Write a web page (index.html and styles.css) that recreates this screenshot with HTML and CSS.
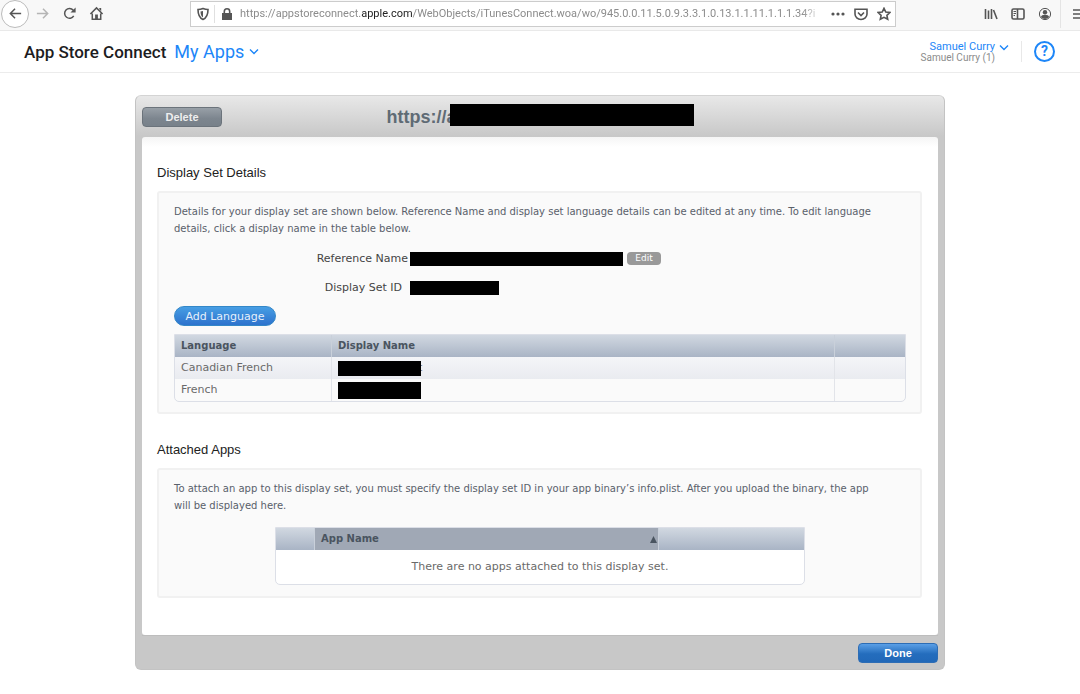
FILE: index.html
```html
<!DOCTYPE html>
<html lang="en">
<head>
<meta charset="utf-8">
<title>App Store Connect</title>
<link rel="stylesheet" href="styles.css">
</head>
<body>
<nav class="toolbar" aria-label="Browser">
  <div class="nav-buttons">
    <button class="icon-btn back" aria-label="Back"><svg width="16" height="16" viewBox="0 0 16 16"><path d="M14 8H2.5M7.500 3L2.500 8l5 5"/></svg></button>
    <button class="icon-btn faded" aria-label="Forward"><svg width="16" height="16" viewBox="0 0 16 16"><path d="M2 8h11.500M8.500 3l5 5-5 5"/></svg></button>
    <button class="icon-btn" aria-label="Reload"><svg width="16" height="16" viewBox="0 0 16 16"><path d="M12.500 10.500A5.200 5.200 0 1 1 12 4.500"/><path class="solid" d="M14.500 1.500v5.500H9z"/></svg></button>
    <button class="icon-btn" aria-label="Home"><svg width="16" height="16" viewBox="0 0 16 16"><path d="M1.500 8.500L8 2l6.500 6.500M3.500 8v6h9V8"/><path class="solid" d="M6.500 14V9h3v5zM11 2h2v3.500l-2-2z"/></svg></button>
  </div>
  <div class="address">
    <button class="icon-btn shield" aria-label="Tracking protection"><svg width="14" height="14" viewBox="0 0 14 14"><path d="M7 1.500c2 .8 3.500 1 5 1 0 5-1.500 8.500-5 10-3.500-1.500-5-5-5-10 1.500 0 3-.2 5-1z"/><path class="solid" d="M7 4v6.500C5.200 9.300 4.500 7 4.500 4.500z"/></svg></button>
    <svg class="lock" width="12" height="14" viewBox="0 0 12 14"><path class="solid" d="M1 6h10v7H1z"/><path d="M3.300 7V4.500a2.700 2.700 0 0 1 5.400 0V7"/></svg>
    <div class="url" role="textbox" aria-label="Address" contenteditable="true" spellcheck="false">https://appstoreconnect.<span class="domain">apple.com</span>/WebObjects/iTunesConnect.woa/wo/945.0.0.11.5.0.9.3.3.1.0.13.1.1.11.1.1.1.34?i</div>
    <button class="icon-btn" aria-label="Page actions"><svg width="14" height="14" viewBox="0 0 14 14"><g class="solid"><circle cx="2" cy="7" r="1.600"/><circle cx="7" cy="7" r="1.600"/><circle cx="12" cy="7" r="1.600"/></g></svg></button>
    <button class="icon-btn" aria-label="Save to Pocket"><svg width="14" height="14" viewBox="0 0 14 14"><path d="M1 2.200h12V7A6 5.500 0 0 1 1 7zM4 5.500l3 3 3-3"/></svg></button>
    <button class="icon-btn" aria-label="Bookmark"><svg width="14" height="14" viewBox="0 0 14 14"><path d="M7 1.300l1.800 3.700 4.100.5-3 2.800.8 4L7 10.300l-3.700 2 .8-4-3-2.800 4.100-.5z"/></svg></button>
  </div>
  <div class="tools">
    <button class="icon-btn" aria-label="Library"><svg width="14" height="14" viewBox="0 0 14 14"><path d="M1.500 2v10M4.500 3.500V12M7.500 2v10M9.500 3l3.500 9"/></svg></button>
    <button class="icon-btn" aria-label="Sidebars"><svg width="14" height="14" viewBox="0 0 14 14"><rect x="1" y="2" width="12" height="10" rx="1.500"/><path d="M6.500 2v10"/><path class="thin" d="M2.500 4.500H5M2.500 6.500H5M2.500 8.500H4"/></svg></button>
    <button class="icon-btn" aria-label="Account"><svg width="14" height="14" viewBox="0 0 14 14"><circle class="thin" cx="7" cy="7" r="5.600"/><circle class="solid" cx="7" cy="5.300" r="2.200"/><path class="solid" d="M3 10c0-3 8-3 8 0-2 2.500-6 2.500-8 0z"/></svg></button>
  </div>
  <button class="icon-btn menu" aria-label="Menu"><svg width="14" height="14" viewBox="0 0 14 14"><path d="M1 3h12M1 7h12M1 11h12"/></svg></button>
</nav>

<header class="site-header">
  <h1 class="brand">App Store Connect</h1>
  <a class="section-link" href="#apps">My Apps <svg width="10" height="7" viewBox="0 0 10 7"><path d="M1 1.500l4 4 4-4"/></svg></a>
  <div class="user">
    <a class="user-name" href="#account">Samuel Curry <svg width="10" height="7" viewBox="0 0 10 7"><path d="M1 1.500l4 4 4-4"/></svg></a>
    <span class="user-org">Samuel Curry (1)</span>
  </div>
  <a class="help" href="#help" aria-label="Help"><span class="help-mark">?</span></a>
</header>

<main class="panel">
  <div class="panel-head">
    <button class="btn delete">Delete</button>
    <h2 class="panel-title">https://a<span class="redacted title-mask"></span></h2>
  </div>
  <div class="panel-body">
    <section class="group">
      <h3 class="group-title">Display Set Details</h3>
      <div class="box">
        <p class="note">Details for your display set are shown below. Reference Name and display set language details can be edited at any time. To edit language details, click a display name in the table below.</p>
        <dl class="fields">
          <div class="field">
            <dt class="label">Reference Name</dt>
            <dd class="value"><span class="redacted name-mask"></span><button class="edit">Edit</button></dd>
          </div>
          <div class="field">
            <dt class="label spaced">Display Set ID</dt>
            <dd class="value"><span class="redacted id-mask"></span></dd>
          </div>
        </dl>
        <button class="add">Add Language</button>
        <table class="grid languages">
          <colgroup><col class="col-lang"><col><col class="col-end"></colgroup>
          <thead><tr><th>Language</th><th>Display Name</th><th></th></tr></thead>
          <tbody>
            <tr class="odd"><td>Canadian French</td><td><span class="masked"><span class="redacted cell-mask"></span><span class="tail">t</span></span></td><td></td></tr>
            <tr><td>French</td><td><span class="masked"><span class="redacted cell-mask tall"></span></span></td><td></td></tr>
          </tbody>
        </table>
      </div>
    </section>
    <section class="group">
      <h3 class="group-title">Attached Apps</h3>
      <div class="box apps-box">
        <p class="note">To attach an app to this display set, you must specify the display set ID in your app binary’s info.plist. After you upload the binary, the app will be displayed here.</p>
        <table class="grid apps">
          <colgroup><col class="col-icon"><col><col class="col-extra"></colgroup>
          <thead><tr><th></th><th class="sorted"><span class="sort-label">App Name <svg width="7" height="7" viewBox="0 0 7 7"><path d="M3.500 0L7 7H0z"/></svg></span></th><th></th></tr></thead>
          <tbody><tr><td class="empty" colspan="3">There are no apps attached to this display set.</td></tr></tbody>
        </table>
      </div>
    </section>
  </div>
  <div class="panel-foot"><button class="btn done">Done</button></div>
</main>
</body>
</html>
```
FILE: styles.css
```css
* { box-sizing: border-box; }
body {
  margin: 0;
  background: #fff;
  color: #59606a;
  font: 11px/16px "DejaVu Sans", Verdana, sans-serif;
}
button { font: inherit; border: 0; padding: 0; cursor: pointer; }
a { text-decoration: none; }
h1, h2, h3, p, dl, dd { margin: 0; }

/* Browser toolbar */
.toolbar {
  display: flex;
  align-items: center;
  height: 31px;
  padding-bottom: 3px;
  background: #f8f8f8;
  border-bottom: 1px solid #e9e9e9;
  overflow: hidden;
}
.icon-btn {
  display: flex;
  flex: none;
  align-items: center;
  justify-content: center;
  background: none;
}
.icon-btn svg, .lock {
  flex: none;
  fill: none;
  stroke: #555;
  stroke-width: 1.6;
}
.toolbar .solid { fill: #555; stroke: none; }
.toolbar .thin { stroke-width: 1; }
.nav-buttons { display: flex; align-items: center; gap: 12px; width: 190px; flex: none; }
.nav-buttons svg { width: 15px; height: 15px; }
.back {
  width: 28px;
  height: 28px;
  margin-left: 1px;
  margin-right: -6px;
  border: 1px solid #bbb;
  border-radius: 50%;
  background: #fff;
}
.icon-btn.faded svg { stroke: #b5b5b5; }
.address {
  display: flex;
  flex: 1;
  min-width: 0;
  align-items: center;
  gap: 9px;
  height: 26px;
  padding: 0 4px 0 5px;
  border: 1px solid #ccc;
  background: #fff;
}
.shield { width: 19px; height: 18px; padding-right: 5px; border-right: 1px solid #e0e0e0; }
.lock { margin: 0 -2px 0 -3px; }
.url {
  flex: 1;
  min-width: 0;
  overflow: hidden;
  white-space: nowrap;
  color: #8c8c8c;
  font: 11px/18px Roboto, "Noto Sans", sans-serif;
  -webkit-mask-image: linear-gradient(to left, transparent, #000 20px);
  mask-image: linear-gradient(to left, transparent, #000 20px);
}
.domain { color: #222; }
.tools { display: flex; gap: 13px; margin-left: 88px; padding-right: 8px; }
.menu { justify-content: flex-start; width: 20px; height: 28px; padding-left: 11px; border-left: 1px solid #e4e4e4; }

/* Site header */
.site-header {
  display: flex;
  align-items: center;
  height: 42px;
  padding: 0 25px 0 24px;
  border-bottom: 1px solid #ececec;
  font-family: Roboto, "Liberation Sans", sans-serif;
}
.site-header svg { fill: none; stroke: #1d86f8; stroke-width: 1.4; }
.brand { color: #1d1d1f; font-size: 17px; font-weight: 500; line-height: 24px; }
.section-link { margin-left: 8px; color: #1d86f8; font-size: 18px; line-height: 24px; }
.section-link svg { margin-bottom: 3px; }
.user {
  display: grid;
  grid-template-columns: auto auto;
  justify-items: end;
  margin-left: auto;
  line-height: 11px;
}
.user-name { display: contents; color: #1d86f8; }
.user-name svg { margin: 3px 0 0 4px; }
.user-org { grid-column: 1; color: #8b8b8b; font-size: 10px; }
.help {
  margin-left: 12px;
  padding-left: 12px;
  border-left: 1px solid #e8e8e8;
  color: #1d86f8;
}
.help-mark {
  display: flex;
  align-items: center;
  justify-content: center;
  width: 21px;
  height: 21px;
  border: 2px solid #1d86f8;
  border-radius: 50%;
  font: bold 14px/17px Roboto, sans-serif;
}

/* Panel */
.panel {
  max-width: 810px;
  margin: 22px auto 24px;
  padding: 0 6px;
  border: 1px solid #c3c3c3;
  border-top-color: #d4d4d4;
  border-radius: 6px;
  background: linear-gradient(#e8e8e8, #c8c8c8 40px);
}
.panel-head {
  display: grid;
  grid-template-columns: 80px 1fr 80px;
  align-items: center;
  height: 41px;
}
.btn {
  width: 80px;
  height: 20px;
  border-radius: 4px;
  color: #fff;
  font: bold 11px/18px "Liberation Sans", Arial, sans-serif;
}
.delete {
  border: 1px solid #6b737b;
  background: linear-gradient(#98a0a7, #7c858e 60%, #78818a);
  color: #eee;
}
.panel-title {
  display: flex;
  align-items: center;
  justify-content: center;
  color: #5f6b75;
  font: bold 18px/24px "Liberation Sans", Arial, sans-serif;
}
.redacted { display: block; flex: none; background: #000; }
.title-mask { z-index: 1; width: 244px; height: 22px; margin: 0 0 3px -7px; }
.panel-body {
  padding: 27px 16px 37px 15px;
  border-radius: 3px;
  background: linear-gradient(#f5f5f5, #fff 10px);
}
.group + .group { margin-top: 27px; }
.group-title {
  margin-bottom: 9px;
  color: #222;
  font: 13px/18px "Liberation Sans", Arial, sans-serif;
}
.box {
  padding: 10px 14px 10px 15px;
  border: 2px solid #f1f1f1;
  border-radius: 3px;
  background: #fafafa;
}
.note { padding-right: 20px; font-size: 10px; line-height: 17px; }
.fields { margin-top: 13px; }
.field { display: flex; align-items: center; height: 18px; }
.field + .field { margin-top: 11px; }
.label { width: 236px; padding-right: 2px; color: #444; text-align: right; }
.spaced { padding-right: 8px; }
.value { display: flex; gap: 4px; }
.name-mask { width: 213px; height: 14px; }
.id-mask { width: 89px; height: 14px; }
.edit {
  width: 34px;
  height: 13px;
  border-radius: 4px;
  background: #999;
  color: #fff;
  font-size: 9px;
  line-height: 13px;
}
.add {
  display: block;
  width: 102px;
  height: 20px;
  margin-top: 9px;
  border: 1px solid #3387c8;
  border-radius: 10px;
  background: linear-gradient(#479ee4, #2d72cd);
  color: #e6f0fb;
  line-height: 17px;
}

/* Tables */
.grid {
  border: 1px solid #dcdfe7;
  border-radius: 0 0 5px 5px;
  border-collapse: separate;
  border-spacing: 0;
  table-layout: fixed;
}
.grid th {
  height: 22px;
  padding: 0 6px;
  background: linear-gradient(#d1d8e1, #a9b4c5);
  color: #4a5460;
  font-size: 10px;
  text-align: left;
}
.grid th + th { border-left: 1px solid #c9d0da; }
.grid td { height: 22px; padding: 0 6px; color: #6a6a6a; }
.grid td + td { border-left: 1px solid #e2e4e9; }
.languages { width: 100%; margin-top: 8px; }
.odd td { background: linear-gradient(#f4f5f8, #e9ebf0); }
.col-lang { width: 156px; }
.col-end { width: 71px; }
.masked { display: flex; align-items: center; }
.cell-mask { z-index: 1; width: 83px; height: 15px; }
.tall { height: 17px; }
.tail { margin-left: -3px; }
.apps-box { padding-bottom: 11px; }
.apps { width: 530px; max-width: 100%; margin: 13px auto 0; background: #fff; }
.col-icon { width: 38px; }
.col-extra { width: 146px; }
.grid .sorted { padding-right: 1px; background: #a0a8b5; }
.sort-label { display: flex; align-items: center; justify-content: space-between; }
.sort-label svg { fill: #4a5460; }
.grid .empty { height: 34px; text-align: center; }

.panel-foot { display: flex; justify-content: flex-end; padding: 7px 0 6px; border-top: 1px solid #bdbdbd; }
.done { border: 1px solid #2d6db5; background: linear-gradient(#5a9fe6, #246dbd 55%, #2168b8); }
```
